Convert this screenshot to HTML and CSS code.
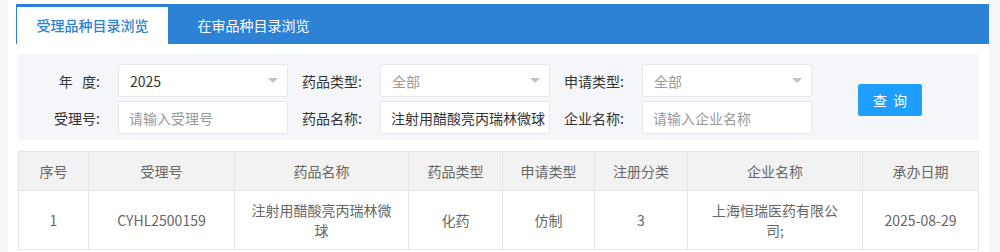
FILE: index.html
```html
<!DOCTYPE html>
<html lang="zh-CN">
<head>
  <meta charset="UTF-8">
  <title>品种目录浏览</title>
  <link rel="stylesheet" href="styles.css">
</head>
<body>
  <div class="page">
    <div class="tab-bar">
      <div class="tab active">受理品种目录浏览</div>
      <div class="tab">在审品种目录浏览</div>
    </div>

    <div class="content">
      <div class="search-panel">
        <div class="search-grid">
          <label class="field-label">年&nbsp;&nbsp;&nbsp;度:</label>
          <div class="select-box"><span>2025</span><i class="arrow"></i></div>
          <label class="field-label">药品类型:</label>
          <div class="select-box muted"><span>全部</span><i class="arrow"></i></div>
          <label class="field-label">申请类型:</label>
          <div class="select-box muted"><span>全部</span><i class="arrow"></i></div>

          <label class="field-label">受理号:</label>
          <input class="text-input" type="text" placeholder="请输入受理号">
          <label class="field-label">药品名称:</label>
          <input class="text-input" type="text" value="注射用醋酸亮丙瑞林微球">
          <label class="field-label">企业名称:</label>
          <input class="text-input" type="text" placeholder="请输入企业名称">
        </div>
        <button class="search-btn">查询</button>
      </div>

      <table class="result-table">
        <colgroup>
          <col style="width: 70px">
          <col style="width: 146px">
          <col style="width: 174px">
          <col style="width: 94px">
          <col style="width: 92px">
          <col style="width: 93px">
          <col style="width: 175px">
          <col style="width: 116px">
        </colgroup>
        <thead>
          <tr>
            <th>序号</th>
            <th>受理号</th>
            <th>药品名称</th>
            <th>药品类型</th>
            <th>申请类型</th>
            <th>注册分类</th>
            <th>企业名称</th>
            <th>承办日期</th>
          </tr>
        </thead>
        <tbody>
          <tr>
            <td>1</td>
            <td>CYHL2500159</td>
            <td>注射用醋酸亮丙瑞林微球</td>
            <td>化药</td>
            <td>仿制</td>
            <td>3</td>
            <td class="company">上海恒瑞医药有限公司;</td>
            <td>2025-08-29</td>
          </tr>
        </tbody>
      </table>
    </div>
  </div>
</body>
</html>
```

FILE: styles.css
```css
body {
  margin: 0;
  background-color: #f6f6f9;
  font-family: "Noto Sans CJK SC", "Noto Sans", sans-serif;
  font-size: 14px;
  color: #333;
  height: 252px;
  overflow: hidden;
}

.page {
  margin-left: 8px;
  width: 973px;
  height: 252px;
  padding: 4px 0 0 8px;
  background: #fff;
}

/* tabs */
.tab-bar {
  display: flex;
  gap: 10px;
  height: 40px;
  padding: 3px 0 0 1px;
  box-sizing: border-box;
  background-color: #2d82d6;
}

.tab {
  width: 151px;
  height: 37px;
  line-height: 37px;
  text-align: center;
  color: #fff;
}

.tab.active {
  background: #fff;
  color: #2d82d6;
  font-weight: 500;
}

.content {
  padding: 10px 10px 0 2px;
}

/* search panel */
.search-panel {
  display: flex;
  align-items: center;
  background-color: #f5f6fa;
  padding: 10px 0 6px 0;
}

.search-grid {
  display: grid;
  grid-template-columns: 100px 170px 92px 170px 92px 170px;
  row-gap: 4px;
  align-items: center;
}

.field-label {
  text-align: right;
  padding-right: 18px;
  white-space: nowrap;
  color: #333;
}

.select-box,
.text-input {
  height: 33px;
  box-sizing: border-box;
  border: 1px solid #e8e8ec;
  background: #fff;
  border-radius: 2px;
  padding: 0 11px;
  font-family: inherit;
  font-size: 14px;
  color: #333;
}

.select-box {
  display: flex;
  align-items: center;
  justify-content: space-between;
}

.select-box.muted span {
  color: #999;
}

.arrow {
  width: 0;
  height: 0;
  border-left: 5px solid transparent;
  border-right: 5px solid transparent;
  border-top: 5px solid #c2c2c2;
  margin-right: -2px;
}

.text-input {
  width: 170px;
  padding: 0 4px 0 10px;
  outline: none;
}

.text-input::placeholder {
  color: #999;
}

.search-btn {
  margin-left: 46px;
  margin-top: 2px;
  width: 64px;
  height: 32px;
  border: none;
  border-radius: 2px;
  background-color: #1e9fff;
  color: #fff;
  font-family: inherit;
  font-size: 14px;
  letter-spacing: 6px;
  text-indent: 6px;
}

/* table */
.result-table {
  margin-top: 11px;
  width: 960px;
  table-layout: fixed;
  border-collapse: collapse;
  color: #666;
}

.result-table th,
.result-table td {
  border: 1px solid #e6e6e6;
  padding: 9px 15px;
  line-height: 20px;
  text-align: center;
  font-weight: normal;
}

.result-table td.company {
  padding: 9px 18px;
}

.result-table th {
  background-color: #f2f2f2;
}
```
